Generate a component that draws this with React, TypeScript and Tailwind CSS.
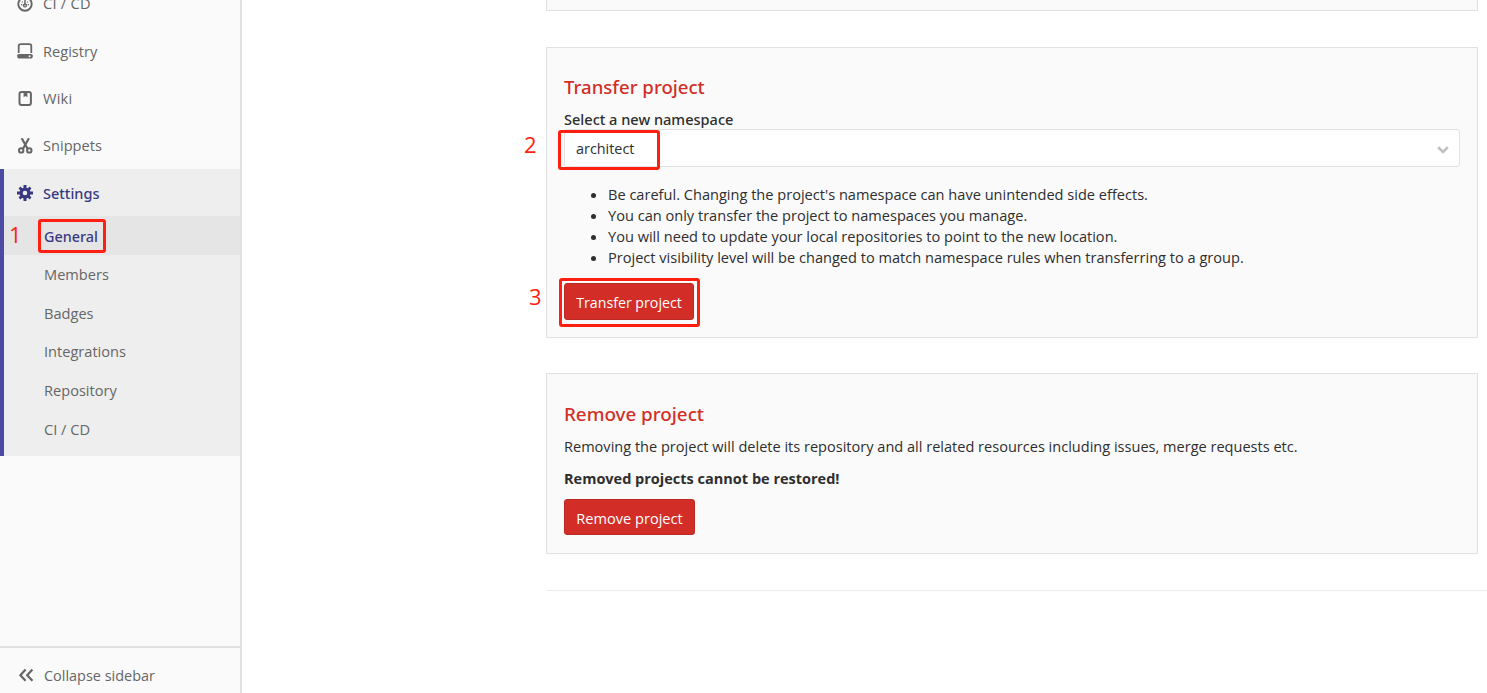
import type { ReactNode } from 'react';

function GaugeIcon() {
  return (
    <svg className="size-4" viewBox="0 0 16 16" fill="none" stroke="currentColor">
      <circle cx="8" cy="8" r="6.7" strokeWidth="1.9" />
      <path d="M8 4.6V9" strokeWidth="1.5" strokeLinecap="round" />
      <circle cx="8" cy="9.4" r="1.5" strokeWidth="1.3" />
      <path d="M4 8.6h1.3M10.7 8.6h1.3M4.9 5.6l.8.7M11.1 5.6l-.8.7" strokeWidth="1.2" />
    </svg>
  );
}

function DiskIcon() {
  return (
    <svg className="size-4" viewBox="0 0 16 16">
      <path d="M1.7 10V3c0-1.1.7-1.8 1.8-1.8h9c1.1 0 1.8.7 1.8 1.8v7" fill="none" stroke="currentColor" strokeWidth="1.8" />
      <path fillRule="evenodd" fill="currentColor" d="M2.2 11h11.6a2 2 0 0 1 2 2.4c-.2 1.4-.9 2.1-2 2.1H2.2c-1.1 0-1.8-.7-2-2.1a2 2 0 0 1 2-2.4zM12.6 12.3a1 1 0 1 0 0 2a1 1 0 1 0 0-2z" />
    </svg>
  );
}

function BookIcon() {
  return (
    <svg className="size-4" viewBox="0 0 16 16">
      <rect x="2.5" y="1.1" width="11.4" height="12.8" rx="2" fill="none" stroke="currentColor" strokeWidth="2" />
      <path d="M6.6 1.2h3.8v5L8.5 4.9 6.6 6.2z" fill="currentColor" />
    </svg>
  );
}

function ScissorsIcon() {
  return (
    <svg className="size-4" viewBox="0 0 16 16" fill="none" stroke="currentColor">
      <circle cx="4.2" cy="12.4" r="2.2" strokeWidth="2" />
      <circle cx="12.3" cy="12.4" r="2.2" strokeWidth="2" />
      <path d="M4.7.3l5.9 10.4M11.9.3L6 10.7" strokeWidth="2.2" />
    </svg>
  );
}

function GearIcon() {
  return (
    <svg className="size-4" viewBox="0 0 16 16">
      <g stroke="currentColor" strokeWidth="3">
        <path d="M8 0v3.6M8 12.4V16M0 8h3.6M12.4 8H16" />
        <path d="M2.5 2.5l2.4 2.4M11.1 11.1l2.4 2.4M13.5 2.5l-2.4 2.4M4.9 11.1l-2.4 2.4" strokeWidth="2.8" />
      </g>
      <circle cx="8" cy="8" r="3.9" fill="none" stroke="currentColor" strokeWidth="3.2" />
    </svg>
  );
}

function NavItem({ icon, label, box }: { icon: ReactNode; label: string; box: string }) {
  return (
    <div className={`flex items-center gap-2.5 pl-[17px] ${box}`}>
      {icon}
      <span>{label}</span>
    </div>
  );
}

const subItems = ['Members', 'Badges', 'Integrations', 'Repository', 'CI / CD'];

const notes = [
  "Be careful. Changing the project's namespace can have unintended side effects.",
  'You can only transfer the project to namespaces you manage.',
  'You will need to update your local repositories to point to the new location.',
  'Project visibility level will be changed to match namespace rules when transferring to a group.',
];

function DangerButton({ label, size }: { label: string; size: string }) {
  return (
    <button className={`flex items-center justify-center rounded-[3px] border border-[#b92a24] bg-[#d22e27] pt-0.5 text-white ${size}`}>
      {label}
    </button>
  );
}

function Frame({ box }: { box: string }) {
  return <div className={`pointer-events-none absolute rounded-[3px] border-3 border-[#ff1f10] ${box}`} />;
}

function StepNumber({ n, box }: { n: number; box: string }) {
  return <div className={`absolute text-[22px] leading-[22px] text-[#ff1f10] ${box}`}>{n}</div>;
}

export default function App() {
  return (
    <div className="relative flex h-[693px] w-[1487px] overflow-hidden bg-white font-['Open_Sans','Noto_Sans',sans-serif] text-[14.6px] leading-[21px] text-[#2e2e2e]">
      <aside className="flex w-[242px] shrink-0 flex-col border-r-2 border-[#e1e1e1] bg-[#fafafa] text-[#666]">
        <div className="-mt-[20px] flex flex-col">
          <NavItem icon={<GaugeIcon />} label="CI / CD" box="h-[47px] tracking-[0.25px]" />
          <NavItem icon={<DiskIcon />} label="Registry" box="h-[48px]" />
          <NavItem icon={<BookIcon />} label="Wiki" box="h-[47px] tracking-[0.2px]" />
          <NavItem icon={<ScissorsIcon />} label="Snippets" box="h-[47px]" />
        </div>
        <div className="flex h-[287px] flex-col border-l-[4.5px] border-[#4b4ba3] bg-[#eee]">
          <div className="-ml-1 flex h-[47px] items-center gap-2.5 pl-[17px] font-['Noto_Sans',sans-serif] text-[14.5px] font-medium text-[#393982]">
            <GearIcon />
            <span className="pt-0.5">Settings</span>
          </div>
          <div className="flex h-[39px] items-center bg-[#e5e5e5] pt-0.5 pl-10 font-['Noto_Sans',sans-serif] text-[14.4px] font-medium text-[#393982]">
            General
          </div>
          {subItems.map((item) => (
            <div key={item} className="flex h-[38.7px] items-center pl-10">
              {item}
            </div>
          ))}
        </div>
        <div className="mt-auto flex h-[47px] shrink-0 items-center gap-2.5 border-t-2 border-[#e1e1e1] pt-2.5 pl-[18px]">
          <svg className="size-4" viewBox="0 0 16 16" fill="none" stroke="currentColor" strokeWidth="2.2">
            <path d="M7.6 1.6L2.4 7.2l5.2 5.6M14.4 1.6L9.2 7.2l5.2 5.6" />
          </svg>
          <span className="text-[14.45px]">Collapse sidebar</span>
        </div>
      </aside>

      <main className="ml-[304px] flex w-[941px] shrink-0 flex-col">
        <div className="h-[11px] w-[932px] shrink-0 border border-t-0 border-[#e1e1e1] bg-[#fafafa]" />

        <section className="mt-9 flex h-[291px] w-[932px] shrink-0 flex-col border border-[#e1e1e1] bg-[#fafafa] px-[17px]">
          <h4 className="mt-[26px] font-['Noto_Sans',sans-serif] text-[18.6px] leading-[26px] font-medium text-[#d22e27]">Transfer project</h4>
          <label className="mt-[9px] font-['Noto_Sans',sans-serif] text-[14.55px] leading-[20px] font-medium">Select a new namespace</label>
          <div className="flex h-[38px] w-[896px] shrink-0 items-center justify-between rounded-[3px] border border-[#e1e1e1] bg-white pr-[10px] pl-[11px]">
            <span className="text-[14.4px]">architect</span>
            <svg className="mt-1 h-2 w-3" viewBox="0 0 12 8" fill="none" stroke="#bfbfbf" strokeWidth="2.6">
              <path d="M1.2 1.3L6 5.9l4.8-4.6" />
            </svg>
          </div>
          <ul className="mt-[17px] flex list-disc flex-col pl-[44px] text-[14.58px]">
            {notes.map((n) => (
              <li key={n}>{n}</li>
            ))}
          </ul>
          <div className="mt-[15px] flex">
            <DangerButton label="Transfer project" size="h-[37px] w-[130px] text-[14.2px]" />
          </div>
        </section>

        <section className="mt-[35px] flex h-[181px] w-[932px] shrink-0 flex-col border border-[#e1e1e1] bg-[#fafafa] px-[17px]">
          <h4 className="mt-[27px] font-['Noto_Sans',sans-serif] text-[18.8px] leading-[26px] font-medium text-[#d22e27]">Remove project</h4>
          <p className="mt-[9px] text-[14.56px]">
            Removing the project will delete its repository and all related resources including issues, merge requests etc.
          </p>
          <strong className="mt-[11px] text-[14.5px] font-bold">Removed projects cannot be restored!</strong>
          <div className="mt-[10px] flex">
            <DangerButton label="Remove project" size="h-9 w-[131px]" />
          </div>
        </section>

        <hr className="mt-9 w-[941px] border-[#ececec]" />
      </main>

      <Frame box="left-[38px] top-[219px] h-[34px] w-[68px]" />
      <Frame box="left-[558px] top-[130px] h-[40px] w-[102px]" />
      <Frame box="left-[559px] top-[278px] h-[49px] w-[141px]" />
      <StepNumber n={1} box="left-[9px] top-[223px]" />
      <StepNumber n={2} box="left-[524px] top-[133px]" />
      <StepNumber n={3} box="left-[529px] top-[285px]" />
    </div>
  );
}
